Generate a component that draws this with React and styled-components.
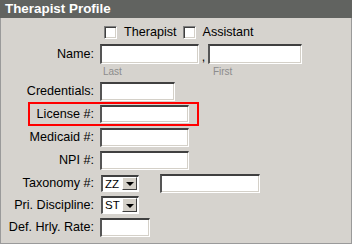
import React from "react";
import styled, { createGlobalStyle } from "styled-components";

const Global = createGlobalStyle`
  html, body { margin: 0; padding: 0; background: #ffffff; }
  body { font-family: "Liberation Sans", Arial, sans-serif; }
`;

const Panel = styled.div`
  width: 352px;
  height: 244px;
  box-sizing: border-box;
  background: #d6d3ce;
  border: 1px solid #9a9a9a;
  border-top: none;
  display: flex;
  flex-direction: column;
  font-family: "Liberation Sans", Arial, sans-serif;
  font-size: 12.6px;
  color: #000;
`;

const Header = styled.div`
  height: 18px;
  background: #616360;
  color: #fff;
  font-weight: bold;
  font-size: 13.4px;
  line-height: 18px;
  padding-left: 5px;
  margin: 0 -1px;
`;

const Body = styled.div`
  display: flex;
  flex-direction: column;
  padding-top: 4px;
`;

const Row = styled.div`
  display: flex;
  align-items: ${(p) => (p.$top ? "flex-start" : "center")};
  height: ${(p) => p.$h}px;
  margin-top: ${(p) => p.$mt || 0}px;
  line-height: 18px;
`;

const Label = styled.div`
  width: ${(p) => p.$w || 95}px;
  box-sizing: border-box;
  padding-right: 2px;
  text-align: right;
  flex-shrink: 0;
  margin-right: 4px;
  white-space: nowrap;
`;

const Highlight = styled.div`
  display: flex;
  align-items: flex-start;
  box-sizing: border-box;
  height: 24px;
  width: 171px;
  margin-left: 27px;
  border: 2px solid #ff0000;
  padding-top: 1px;
  line-height: 18px;
`;

const TextBox = styled.div`
  box-sizing: border-box;
  width: ${(p) => p.$w}px;
  height: ${(p) => p.$h || 19}px;
  background: #fff;
  border-style: solid;
  border-width: 2px 1px 1px 2px;
  border-color: #404040 #ffffff #ffffff #555555;
  box-shadow: inset -1px -1px 0 #d4d0c8;
  flex-shrink: 0;
  margin-left: ${(p) => p.$ml || 0}px;
`;

const Comma = styled.span`
  width: 9px;
  text-align: center;
  align-self: flex-end;
  line-height: 14px;
`;

const HintRow = styled.div`
  display: flex;
  height: 15px;
  font-size: 10px;
  color: #8c8c8c;
  line-height: 14px;
  padding-top: 1px;
`;

const Hint = styled.span`
  margin-left: ${(p) => p.$ml}px;
`;

const CheckItem = styled.label`
  display: flex;
  align-items: center;
  margin-left: ${(p) => p.$ml}px;
`;

const CheckBox = styled.span`
  display: inline-block;
  box-sizing: border-box;
  width: 13px;
  height: 13px;
  background: #fff;
  border-style: solid;
  border-width: 1px;
  border-color: #808080 #ffffff #ffffff #808080;
  box-shadow: inset 1px 1px 0 #404040, inset -1px -1px 0 #d4d0c8;
  margin-right: 7px;
`;

const Select = styled.div`
  box-sizing: border-box;
  display: flex;
  width: 38px;
  height: ${(p) => p.$h || 18}px;
  margin-left: 1px;
  margin-top: ${(p) => p.$mt || 0}px;
  background: #fff;
  border-style: solid;
  border-width: 2px 1px 1px 2px;
  border-color: #404040 #ffffff #ffffff #555555;
  flex-shrink: 0;
  padding: 0 1px 1px 0;
`;

const SelectText = styled.span`
  flex: 1;
  padding-left: 2px;
  font-size: 11.5px;
  line-height: 14px;
`;

const SelectButton = styled.span`
  width: 15px;
  box-sizing: border-box;
  background: #d4d0c8;
  border-style: solid;
  border-width: 1px;
  border-color: #ffffff #404040 #404040 #ffffff;
  display: flex;
  align-items: center;
  justify-content: center;
`;

const Arrow = styled.span`
  width: 0;
  height: 0;
  border-left: 4px solid transparent;
  border-right: 4px solid transparent;
  border-top: 4px solid #000;
  margin-top: 1px;
`;

function Dropdown({ value, h, mt }) {
  return (
    <Select $h={h} $mt={mt}>
      <SelectText>{value}</SelectText>
      <SelectButton>
        <Arrow />
      </SelectButton>
    </Select>
  );
}

export default function App() {
  return (
    <>
      <Global />
      <Panel>
        <Header>Therapist Profile</Header>
        <Body>
          <Row $h={20}>
            <CheckItem $ml={103}>
              <CheckBox />
              Therapist
            </CheckItem>
            <CheckItem $ml={6}>
              <CheckBox />
              Assistant
            </CheckItem>
          </Row>
          <Row $h={20} $mt={2}>
            <Label>Name:</Label>
            <TextBox $w={99} $h={20} />
            <Comma>,</Comma>
            <TextBox $w={94} $h={20} />
          </Row>
          <HintRow>
            <Hint $ml={102}>Last</Hint>
            <Hint $ml={91}>First</Hint>
          </HintRow>
          <Row $h={20} $mt={2} $top>
            <Label>Credentials:</Label>
            <TextBox $w={75} />
          </Row>
          <Highlight>
            <Label $w={66}>License #:</Label>
            <TextBox $w={89} $h={18} />
          </Highlight>
          <Row $h={23} $mt={2} $top>
            <Label>Medicaid #:</Label>
            <TextBox $w={89} />
          </Row>
          <Row $h={23} $top>
            <Label>NPI #:</Label>
            <TextBox $w={89} />
          </Row>
          <Row $h={22} $top>
            <Label>Taxonomy #:</Label>
            <Dropdown value="ZZ" h={17} mt={1} />
            <TextBox $w={100} $ml={21} />
          </Row>
          <Row $h={22} $top>
            <Label>Pri. Discipline:</Label>
            <Dropdown value="ST" h={18} />
          </Row>
          <Row $h={22} $top>
            <Label>Def. Hrly. Rate:</Label>
            <TextBox $w={50} />
          </Row>
        </Body>
      </Panel>
    </>
  );
}
